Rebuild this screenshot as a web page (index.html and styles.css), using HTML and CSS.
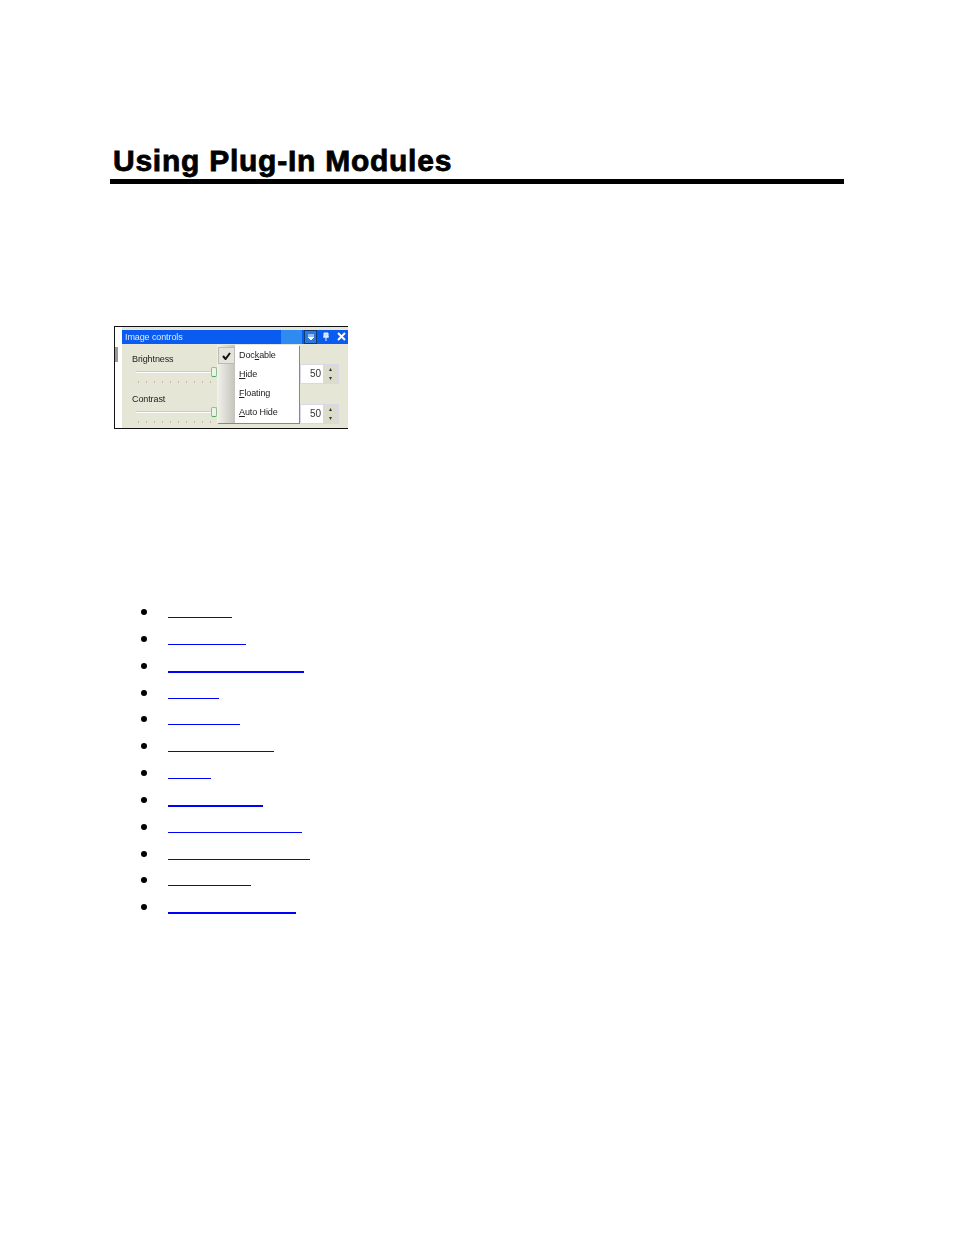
FILE: index.html
```html
<!DOCTYPE html>
<html>
<head>
    <meta charset="utf-8">
    <title>Using Plug-In Modules</title>
    <link rel="stylesheet" href="styles.css">
</head>
<body>
    <div class="page">
        <h1 class="page__title">Using Plug-In Modules</h1>

        <div class="shot">
            <div class="shot__gutter"><span class="shot__grip"></span></div>
            <div class="shot__window">
                <div class="titlebar">
                    <span class="titlebar__name">Image controls</span>
                    <span class="titlebar__glow"></span>
                    <span class="titlebar__drop">
                        <svg width="8" height="6" viewBox="0 0 8 6"><path d="M1 1h6M1 3h6L4 6z" fill="#fff" stroke="#fff" stroke-width="1"/></svg>
                    </span>
                    <span class="titlebar__pin">
                        <svg width="8" height="9" viewBox="0 0 8 9"><path d="M2 1h4v4H2zM1 5h6M4 5v4" fill="#cfe0ff" stroke="#e8f0ff" stroke-width="1"/></svg>
                    </span>
                    <span class="titlebar__close">
                        <svg width="9" height="9" viewBox="0 0 9 9"><path d="M1 1l7 7M8 1L1 8" stroke="#fff" stroke-width="2"/></svg>
                    </span>
                </div>
                <div class="panel">
                    <div class="control">
                        <div class="control__label">Brightness</div>
                        <div class="control__track"><span class="control__thumb"></span></div>
                        <div class="control__ticks"><i></i><i></i><i></i><i></i><i></i><i></i><i></i><i></i><i></i><i></i></div>
                        <div class="spin"><span class="spin__value">50</span><span class="spin__btns"><b>&#9652;</b><b>&#9662;</b></span></div>
                    </div>
                    <div class="control">
                        <div class="control__label">Contrast</div>
                        <div class="control__track"><span class="control__thumb"></span></div>
                        <div class="control__ticks"><i></i><i></i><i></i><i></i><i></i><i></i><i></i><i></i><i></i><i></i></div>
                        <div class="spin"><span class="spin__value">50</span><span class="spin__btns"><b>&#9652;</b><b>&#9662;</b></span></div>
                    </div>
                </div>
            </div>
            <div class="menu">
                <div class="menu__side">
                    <span class="menu__check">
                        <svg width="9" height="8" viewBox="0 0 9 8"><path d="M1 4l2.5 3L8 1" fill="none" stroke="#111" stroke-width="2"/></svg>
                    </span>
                </div>
                <ul class="menu__items">
                    <li>Doc<u>k</u>able</li>
                    <li><u>H</u>ide</li>
                    <li><u>F</u>loating</li>
                    <li><u>A</u>uto Hide</li>
                </ul>
            </div>
        </div>

        <ul class="links">
            <li class="links__item"><a class="links__line" href="#" style="width: 64px"></a></li>
            <li class="links__item"><a class="links__line" href="#" style="width: 78px"></a></li>
            <li class="links__item"><a class="links__line links__line--thick" href="#" style="width: 136px"></a></li>
            <li class="links__item"><a class="links__line" href="#" style="width: 51px"></a></li>
            <li class="links__item"><a class="links__line" href="#" style="width: 72px"></a></li>
            <li class="links__item"><a class="links__line" href="#" style="width: 106px"></a></li>
            <li class="links__item"><a class="links__line" href="#" style="width: 43px"></a></li>
            <li class="links__item"><a class="links__line links__line--thick" href="#" style="width: 95px"></a></li>
            <li class="links__item"><a class="links__line" href="#" style="width: 134px"></a></li>
            <li class="links__item"><a class="links__line" href="#" style="width: 142px"></a></li>
            <li class="links__item"><a class="links__line" href="#" style="width: 83px"></a></li>
            <li class="links__item"><a class="links__line links__line--thick" href="#" style="width: 128px"></a></li>
        </ul>
    </div>
</body>
</html>
```

FILE: styles.css
```css
html, body {
    background: #fff;
    margin: 0;
    padding: 0;
}
.page {
    height: 1235px;
    box-sizing: border-box;
    padding: 144px 110px 0;
    font-family: "Liberation Sans", arial, sans-serif;
}
.page__title {
    border-bottom: 5px solid #000;
    color: #000;
    font-size: 30px;
    font-weight: bold;
    letter-spacing: 0.75px;
    line-height: 33px;
    margin: 0;
    padding: 0 0 2px 3px;
    -webkit-text-stroke: 0.8px #000;
}

.shot {
    border-bottom: 1px solid #111;
    border-left: 1px solid #111;
    border-top: 1px solid #111;
    box-sizing: border-box;
    display: flex;
    filter: blur(0.45px);
    font-size: 9px;
    height: 103px;
    letter-spacing: -0.1px;
    margin: 142px 0 0 4px;
    overflow: hidden;
    position: relative;
    width: 234px;
}
.shot__gutter {
    background: #fff;
    padding-top: 20px;
    width: 7px;
}
.shot__grip {
    background: #999;
    display: block;
    height: 15px;
    width: 3px;
}
.shot__window {
    background: #e6e6d6;
    flex: 1;
    padding-top: 3px;
}

.titlebar {
    align-items: center;
    background: #0a5cf0;
    color: #dfe9ff;
    display: flex;
    height: 14px;
}
.titlebar__name {
    padding-left: 3px;
    width: 156px;
}
.titlebar__glow {
    background: #2f8bf2;
    height: 14px;
    width: 21px;
}
.titlebar__drop {
    align-items: center;
    background: #2a78e0;
    border: 1px solid #123a70;
    box-sizing: border-box;
    display: flex;
    height: 14px;
    justify-content: center;
    margin-left: 2px;
    width: 13px;
}
.titlebar__pin {
    margin-left: 5px;
    width: 10px;
}
.titlebar__close {
    margin-left: 5px;
}

.panel {
    padding: 9px 0 0 10px;
}
.control {
    height: 40px;
    position: relative;
}
.control__label {
    color: #222;
    line-height: 12px;
}
.control__track {
    background: #cfcfc0;
    border-bottom: 1px solid #fff;
    height: 1px;
    margin: 6px 0 0 4px;
    position: relative;
    width: 80px;
}
.control__thumb {
    background: #eef2e8;
    border: 1px solid #8fbf8f;
    border-bottom-color: #4fa85a;
    border-radius: 2px;
    height: 8px;
    position: absolute;
    right: -1px;
    top: -4px;
    width: 4px;
}
.control__ticks {
    display: flex;
    gap: 7px;
    margin: 8px 0 0 6px;
}
.control__ticks i {
    background: #c9b8a8;
    display: block;
    height: 2px;
    width: 1px;
}

.spin {
    align-items: stretch;
    background: #fff;
    box-shadow: 0 0 0 1px #d8d8e8;
    display: flex;
    height: 18px;
    position: absolute;
    right: 10px;
    top: 12px;
    width: 37px;
}
.spin__value {
    color: #333;
    flex: 1;
    font-size: 10px;
    line-height: 18px;
    padding-right: 1px;
    text-align: right;
}
.spin__btns {
    background: #dcdccc;
    display: flex;
    flex-direction: column;
    margin-left: 1px;
    width: 15px;
}
.spin__btns b {
    color: #333;
    flex: 1;
    font-size: 6px;
    font-weight: normal;
    line-height: 9px;
    text-align: center;
}

.menu {
    background: #fff;
    box-shadow: 1px 1px 0 #888;
    display: flex;
    height: 78px;
    left: 102px;
    position: absolute;
    top: 18px;
    width: 82px;
}
.menu__side {
    background: linear-gradient(to right, #f2f2ec, #c4c4bc);
    padding: 2px 0 0 2px;
    width: 16px;
}
.menu__check {
    align-items: center;
    background: #e4e4dc;
    border: 1px solid #bcbcb4;
    display: flex;
    height: 15px;
    justify-content: center;
    margin-left: -1px;
    width: 15px;
}
.menu__items {
    color: #222;
    list-style: none;
    margin: 0;
    padding: 1px 0 0 4px;
}
.menu__items li {
    line-height: 19px;
}

.links {
    list-style: none;
    margin: 176px 0 0;
    padding: 0 0 0 58px;
}
.links__item {
    height: 26.85px;
    position: relative;
}
.links__item:before {
    background: #000;
    border-radius: 50%;
    content: "";
    height: 6px;
    left: -27px;
    position: absolute;
    top: 4px;
    width: 6px;
}
.links__line {
    border-bottom: 1px solid #00f;
    display: block;
    height: 12px;
}
.links__line--thick {
    border-bottom-width: 2px;
}
```
